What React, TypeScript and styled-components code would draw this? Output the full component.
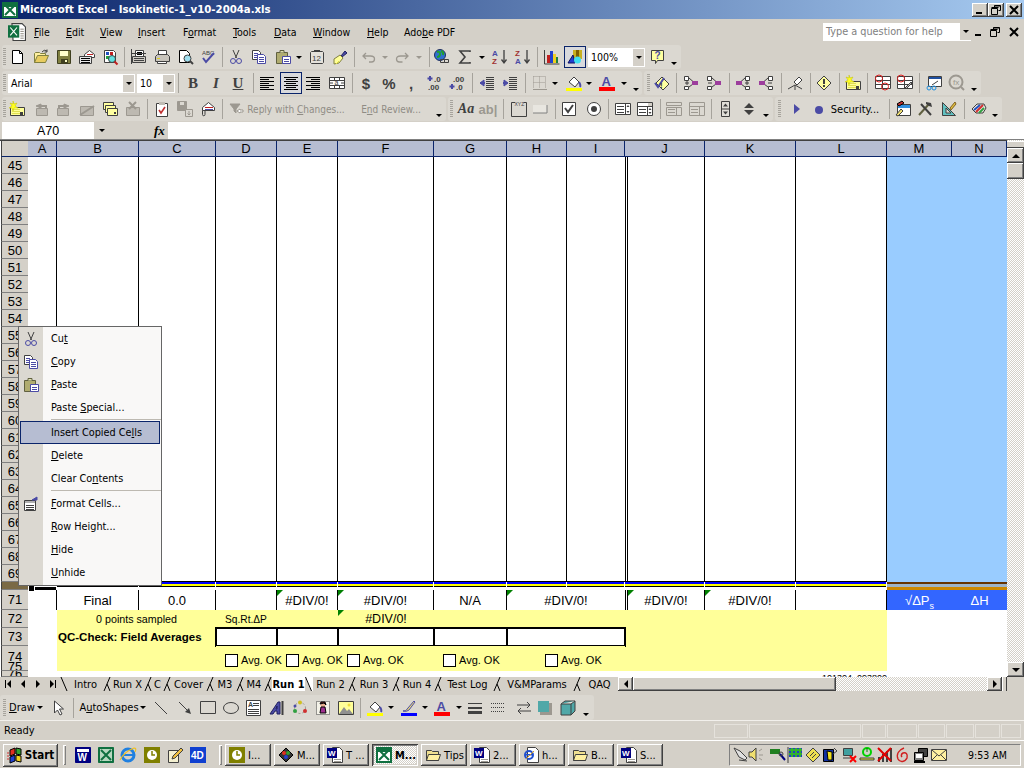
import React from "react";
import styled, { createGlobalStyle } from "styled-components";

const UI = `"DejaVu Sans Condensed", "DejaVu Sans", "Liberation Sans", sans-serif`;
const CELL = `"Liberation Sans", Arial, sans-serif`;
const FACE = "#D4D0C8";
const BAND = "#DBD8D1";
const NAVY = "#0A246A";
const BEVEL = "inset -1px -1px #404040, inset 1px 1px #fff, inset -2px -2px #808080, inset 2px 2px #D4D0C8";
const DITHER = "repeating-conic-gradient(#fff 0 25%, #D4D0C8 0 50%) 0 0 / 2px 2px";

const Global = createGlobalStyle`
  html, body { margin: 0; padding: 0; background: ${FACE}; overflow: hidden; }
  #root { width: 1024px; height: 768px; }
`;

/* ---------- icons ---------- */
const P = ({ d, f = "none", s = "#000", w = 1, da }: { d: string; f?: string; s?: string; w?: number; da?: string }) => (
  <path d={d} fill={f} stroke={s} strokeWidth={w} strokeDasharray={da} />
);
const R = ({ x, y, w, h, f = "#000" }: { x: number; y: number; w: number; h: number; f?: string }) => (
  <rect x={x} y={y} width={w} height={h} fill={f} />
);
const T = ({ x, y, z, f = "#000", b, c }: { x: number; y: number; z: number; f?: string; b?: boolean; c: string }) => (
  <text x={x} y={y} fontSize={z} fill={f} fontWeight={b ? 700 : 400} fontFamily={CELL}>{c}</text>
);
const G1 = "#9C9890";
const G2 = "#BDB9B1";
const PER = "#4B4BA5";
const DK = "#404040";
const Lines = ({ y, x, w, n, s = 2, c = "#000" }: { y: number; x: number; w: number; n: number; s?: number; c?: string }) => (
  <>{Array.from({ length: n }, (_, i) => <R key={i} x={x} y={y + i * s} w={w} h={1} f={c} />)}</>
);
const AltLines = ({ x1, x2, x3, w1, w2 }: { x1: number; x2: number; x3: number; w1: number; w2: number }) => (
  <>
    {Array.from({ length: 7 }, (_, i) => (
      <R key={i} x={i % 2 === 0 ? x1 : x2 + x3} y={2 + i * 2} w={i % 2 === 0 ? w1 : w2} h={1} f="#000" />
    ))}
  </>
);
const Trace = ({ flip, minus }: { flip?: boolean; minus?: boolean }) => (
  <g transform={flip ? "translate(16,0) scale(-1,1)" : undefined}>
    <P d="M1.5 1.5h4v4h-4zM1.5 11.5h4v3h-4z" s={DK} f="#fff" />
    <P d="M6 3l4 3.5M6 12l4-3" s={DK} />
    <R x={9} y={6} w={6} h={4} f="#9C3D9C" />
    {minus ? <R x={2} y={7.5} w={4} h={1} f={DK} /> : <P d="M2 8h4M4 6v4" s={DK} />}
  </g>
);
const Env = () => (
  <>
    <P d="M2.5 6.5l6-5 6 5v3h-12z" f="#fff" s={DK} />
    <R x={5} y={6} w={8} h={1} f="#C02020" /><R x={5} y={8} w={8} h={1} f={PER} />
  </>
);
const ICONS: Record<string, React.ReactNode> = {
  new: <><P d="M3.5 1.5h7l3 3v10h-10z" f="#fff" /><P d="M10.5 1.5v3h3" /></>,
  open: <><P d="M1.5 13.5v-9l1-1h4l1 1h5v2" f="#FFF0A0" s="#808040" /><P d="M1.5 13.5l3-7h11l-3 7z" f="#E8CC60" s="#808040" /><P d="M9 3q2-3 5-1M14 .5v2.5h-2.5" s={DK} /></>,
  save: <><P d="M1.5 1.5h13v13h-13z" f="#808040" s="#404020" /><R x={4} y={2} w={8} h={5} f="#FFFFCC" /><R x={5} y={10} w={7} h={4} f="#404020" /><R x={9} y={11} w={2} h={2} f="#FFFFCC" /></>,
  mail: <><P d="M5.5 5.5l5-4 5 4v3h-10z" f="#fff" s={DK} /><R x={8} y={5} w={6} h={1} f="#C02020" /><P d="M.5 7.5h12v7h-12z" f="#E8E8E8" s={DK} /><Lines x={2} y={9} w={9} n={3} /></>,
  perm: <><P d="M2.5 1.5h9l2 2v10h-11z" f="#fff" s={DK} /><R x={4} y={3} w={3} h={3} f="#2050C0" /><R x={8} y={3} w={3} h={3} f="#C02020" /><R x={4} y={7} w={3} h={3} f="#20A040" /><circle cx={10} cy={10} r={3.5} fill="#60E0E0" stroke={DK} /><P d="M12.5 12.5l3 3" s="#C02020" w={2} /></>,
  parea: <><P d="M4.5 1.5h8v6h-8z" f="#fff" s={DK} /><Lines x={6} y={3} w={5} n={2} /><P d="M.5 0v15M0 4.5h15M1.5 7.5h13v6h-13z" s={DK} f="#CFCBC3" /><Lines x={3} y={9} w={10} n={3} c={DK} /></>,
  print: <><P d="M4.5 1.5h8v5h-8z" f="#fff" s={DK} /><P d="M1.5 7.5l2-2h10l2 2v5h-14z" f="#C8C4BC" s={DK} /><R x={3} y={9} w={3} h={1} f="#E0D020" /><P d="M3.5 12.5h9v2h-9z" f="#fff" s={DK} /></>,
  prev: <><P d="M2.5 1.5h7l3 3v9h-10z" f="#fff" /><circle cx={10.5} cy={9.5} r={3.5} fill="#A0E0F0" stroke={DK} /><P d="M13 12l3 3" s={DK} w={2} /></>,
  spell: <><T x={2} y={6} z={6} f={DK} c="ABC" /><P d="M3 9l3 4 8-9" s={PER} w={2} /></>,
  cut: <><P d="M5 1l3.5 8M11 1l-3.5 8" s={DK} /><circle cx={5} cy={12} r={2.5} fill="none" stroke={PER} /><circle cx={11} cy={12} r={2.5} fill="none" stroke={PER} /></>,
  copy: <><P d="M1.5 1.5h6l2 2v7h-8z" f="#fff" s={DK} /><Lines x={3} y={4} w={4} n={3} c={PER} /><P d="M6.5 5.5h6l2 2v7h-8z" f="#fff" s={PER} /><Lines x={8} y={8} w={5} n={3} c={PER} /></>,
  paste: <><P d="M1.5 3.5h11v11h-11z" f="#B0AC70" s="#606040" /><P d="M5 3.5v-2h4v2" f="#E0E0B0" s="#606040" /><P d="M7.5 7.5h8v7h-8z" f="#fff" s={PER} /><Lines x={9} y={10} w={5} n={2} c={PER} /></>,
  date: <><P d="M1.5 3.5l1-1h11l1 1v10l-1 1h-11l-1-1z" f="#E4E1DA" s={DK} /><R x={5} y={1} w={6} h={2} f={DK} /><T x={3} y={12} z={8} f={DK} c="12" /></>,
  brush: <><P d="M9 7l4-5 2 2-5 4z" f={PER} s="#202060" /><P d="M2 10l6-4 3 3-4 5-5 1z" f="#FFFF99" s="#808040" /><P d="M4 15l3-3" s="#E0E040" /></>,
  undo: <P d="M5 4L2 7l3 3M2.5 7h7q4 0 4 3t-3 3H8" s={G1} w={1.3} />,
  redo: <P d="M11 4l3 3-3 3M13.5 7h-7q-4 0-4 3t3 3h3" s={G1} w={1.3} />,
  link: <><circle cx={7} cy={6} r={5.5} fill="#3070D0" stroke="#203060" /><P d="M4 3q3-1 3 2t-3 3M8 2q3 1 2 4" s="#20A030" w={2} /><P d="M7.5 10.5h4v3h-4zM11.5 10.5h4v3h-4z" s={DK} /></>,
  sigma: <P d="M13 3V2H3l5 6-5 6h10v-1" s={DK} w={1.6} />,
  az: <><T x={0} y={7} z={8} f={PER} b c="A" /><T x={0} y={15} z={8} f="#A03030" b c="Z" /><P d="M12 1v12M9.5 10.5l2.5 3.5 2.5-3.5" s={DK} w={1.3} /></>,
  za: <><T x={0} y={7} z={8} f="#A03030" b c="Z" /><T x={0} y={15} z={8} f={PER} b c="A" /><P d="M12 1v12M9.5 10.5l2.5 3.5 2.5-3.5" s={DK} w={1.3} /></>,
  chart: <><P d="M.5 1v14h15" s={DK} /><R x={3} y={6} w={3} h={8} f="#C02020" /><R x={6} y={2} w={3} h={12} f="#2040D0" /><R x={9} y={5} w={3} h={9} f="#F0D020" /><R x={12} y={8} w={2} h={6} f="#208040" /></>,
  draw: <><R x={6} y={1} w={9} h={9} f="#C8B020" /><R x={9} y={1} w={3} h={9} f="#806000" /><P d="M1 14l5-8 2 8z" f="#2040D0" s="#101060" /><circle cx={10.5} cy={11} r={3.5} fill="#40E0F0" /></>,
  help: <><P d="M1.5 1.5h12v10h-6l-2 3v-3h-4z" f="#FFFFA0" s={DK} /><T x={4.5} y={10} z={10} f={PER} b c="?" /></>,
  alignL: <AltLines x1={1} x2={1} x3={0} w1={14} w2={9} />,
  alignC: <AltLines x1={1} x2={3} x3={0} w1={14} w2={10} />,
  alignR: <AltLines x1={1} x2={6} x3={0} w1={14} w2={9} />,
  merge: <><P d="M.5 2.5h15v11H.5z" f="#fff" s={DK} /><P d="M.5 5.5h15M.5 10.5h15M5.5 2.5v3M10.5 2.5v3M5.5 10.5v3M10.5 10.5v3" s={DK} /><T x={5.5} y={10} z={7} f={DK} c="a" /><P d="M1 8h3M15 8h-3" s={DK} /></>,
  incd: <><P d="M3 1v5M.5 3.5h5" s={PER} w={2} /><T x={7} y={7} z={8} f={DK} b c=".0" /><T x={1} y={15} z={8} f={DK} b c=".00" /></>,
  decd: <><T x={4} y={7} z={8} f={DK} b c=".00" /><P d="M.5 11.5h5" s={PER} w={2} /><P d="M3 9v5" s={PER} w={2} /><T x={7} y={15} z={8} f={DK} b c=".0" /></>,
  outd: <><P d="M5 5L1 8l4 3z" f={PER} s={PER} /><P d="M1 8h5" s={PER} w={2} /><Lines x={7} y={2} w={8} n={7} c={DK} /></>,
  ind: <><P d="M2 5l4 3-4 3z" f={PER} s={PER} /><P d="M1 8h3" s={PER} w={2} /><Lines x={7} y={2} w={8} n={7} c={DK} /></>,
  borders: <><P d="M1.5 1.5h12v12M1.5 1.5v12M7.5 1.5v12M1.5 7.5h12" s={G1} da="1 1" /><P d="M1 14.5h14" s={G1} /></>,
  fill: <><P d="M3 7l5-5 5 5-4 5z" f="#fff" s={DK} /><P d="M13 7q2 3 1 5" s={PER} w={2} /><R x={0} y={13} w={16} h={3} f="#FFFF00" /></>,
  fontc: <><T x={2.5} y={11} z={13} f={PER} b c="A" /><R x={0} y={12} w={16} h={4} f="#FF0000" /></>,
  aud: <><P d="M2 8l6-6 7 7-6 6z" f="#FFFFA0" s={DK} /><P d="M1 8l3 4 6-9" s={PER} w={2} /><T x={6} y={13} z={8} f={DK} b c="!" /></>,
  tr1: <Trace />,
  tr2: <Trace minus />,
  tr3: <Trace flip />,
  tr4: <Trace flip minus />,
  erase: <><P d="M7 7l5-5 3 3-5 5z" f="#fff" s={DK} /><P d="M8 10L1 14M8 10v5M8 10l7 4" s={DK} /></>,
  err: <><P d="M8 1l7 7-7 7-7-7z" f="#FFFFA0" s={DK} /><R x={7} y={4} w={2} h={5} f={DK} /><R x={7} y={10} w={2} h={2} f={DK} /></>,
  ncmt: <><P d="M1.5 6.5h14v8h-14z" f="#FFFF99" s={DK} /><Lines x={3} y={8} w={8} n={3} c="#E0E050" /><P d="M4 0l1 3 3-1-2 3 3 2-4 0-1 3-1-3-3 0 3-2-2-3 3 1z" f="#FFFF20" s="#C0C000" w={0.5} /><R x={11} y={11} w={3} h={3} f={DK} /></>,
  pcmt: <><P d="M3.5 7.5h11v7h-11z" f={G2} s={G1} /><P d="M8 3L3 5l5 2z" f={G1} s={G1} /><P d="M7 5h6v3" s={G1} w={2} /></>,
  ncm2: <><P d="M1.5 7.5h11v7h-11z" f={G2} s={G1} /><P d="M8 3l5 2-5 2z" f={G1} s={G1} /><P d="M9 5H3v3" s={G1} w={2} /></>,
  hcmt: <><P d="M1.5 5.5h13v9h-13z" f={G2} s={G1} /><P d="M1 14l14-9" s={G1} w={2} /></>,
  scmt: <><P d="M1.5 1.5h10v7h-10z" f="#FFFFA0" s={DK} /><P d="M3.5 4.5h10v7h-10z" f="#FFFFA0" s={DK} /><P d="M5.5 7.5h10v7h-10z" f="#FFFFA0" s={DK} /><R x={12} y={11} w={2} h={2} f={DK} /></>,
  dcmt: <><P d="M1.5 6.5h13v8h-13z" f={G2} s={G1} /><P d="M4 1l7 7M11 1L4 8" s={G1} w={2} /></>,
  task: <><P d="M2.5 2.5h11v13h-11z" f="#fff" s={DK} /><R x={5} y={1} w={6} h={3} f="#C0BCB4" /><P d="M5 9l2 3 4-6" s="#C03030" w={1.6} /></>,
  gsave: <><P d="M.5.5h9v9h-9z" f={G1} s={G1} /><R x={3} y={1} w={4} h={3} f="#DBD8D1" /><P d="M8.5 8.5h7v7h-7z" f="#DBD8D1" s={G1} /><P d="M12 10v4M10.5 12.5l1.5 1.5 1.5-1.5" s={G1} /></>,
  mail2: <><Env /><R x={2} y={11} w={11} h={3} f="#DBD8D1" /><P d="M2.5 9.5v4a1.2 1.2 0 0 0 2.5 0v-4" s={DK} /></>,
  reply: <><P d="M1 3h10L7 8v4L5 10V8z" f={G1} s={G1} /><P d="M11 8l-3 2 3 2v-1h3V9h-3z" f="#fff" s={G1} /></>,
  xyz: <><P d="M4 1.5H.5v14h15v-14H13" s={DK} /><T x={3.5} y={5} z={5} f={DK} c="XYZ" /></>,
  btn: <><R x={1} y={4} w={14} h={8} f="#E8E6E0" /><P d="M1 12h14V4" s="#808080" /></>,
  chk: <><P d="M1.5 1.5h13v13h-13z" f="#fff" s={DK} /><P d="M4 7l3 4 5-7" s={DK} w={2} /></>,
  rad: <><circle cx={8} cy={8} r={6.5} fill="#fff" stroke={DK} /><circle cx={8} cy={8} r={3} fill={DK} /></>,
  lst: <><P d="M.5 2.5h15v11H.5zM10.5 2.5v11" f="#fff" s={DK} /><Lines x={2} y={5} w={7} n={3} s={3} c={DK} /><P d="M13 4l-1.5 2h3zM13 12l-1.5-2h3z" f={DK} s="none" /></>,
  cmb: <><P d="M.5 1.5h15v13H.5zM.5 5.5h15M10.5 5.5v9" f="#fff" s={DK} /><R x={11} y={2} w={4} h={3} f={FACE} /><Lines x={2} y={8} w={7} n={2} s={3} c={DK} /><P d="M13 7l-1.5 2h3zM13 13l-1.5-2h3z" f={DK} s="none" /></>,
  glst: <><P d="M.5 1.5h15v3H.5zM.5 6.5h15v8H.5zM10.5 6.5v8" s={G1} /><Lines x={2} y={8} w={7} n={2} s={3} c={G1} /></>,
  gcmb: <><P d="M.5 1.5h15v13H.5zM.5 5.5h15M10.5 5.5v9" s={G1} /><Lines x={2} y={8} w={7} n={2} s={3} c={G1} /></>,
  spn: <><P d="M3.5.5h8v15h-8z" f="#E0DED8" s={DK} /><P d="M3.5 8h8" s={DK} /><P d="M7.5 2.5l-2.5 3h5zM7.5 13.5l-2.5-3h5z" f={DK} s="none" /></>,
  scr: <P d="M8 2l-5 5h10zM8 14l-5-5h10z" f={DK} s="none" />,
  play: <P d="M5 3l6 5-6 5z" f={PER} s="none" />,
  rec: <circle cx={8} cy={9} r={4} fill={PER} />,
  tb: <><P d="M1.5 3.5h13v11h-13z" f="#fff" s={DK} /><R x={2} y={4} w={12} h={3} f="#3090E0" /><P d="M1 3l5-3 2 2-5 3z" f="#C03030" /><P d="M0 14l5-6 2 2-5 5z" f="#F0E070" s={DK} /></>,
  ham: <><P d="M2 14L12 3" s="#606040" w={2} /><P d="M14 14L4 3" s={DK} w={2} /><P d="M9 1l5 1 1 4-3-1-3-2z" f={DK} s="none" /></>,
  rul: <><P d="M1.5 1.5v13h13z" f="#60C0C0" s={DK} /><P d="M5 7v5h5z" f="#DBD8D1" s={DK} /><P d="M9 7l5-6 1 2-5 6z" f="#E0C040" s="#806020" /></>,
  col: <><P d="M1 8l5-5h7l2 4-3 5H5z" f="#E8E6E0" s={DK} /><P d="M3 9l6-5" s="#2050C0" w={2} /><P d="M5 11l7-7" s="#D03030" w={2} /><P d="M8 12l5-5" s="#30A040" w={2} /></>,
  cursor: <P d="M3.5 1v12l3-3 2.5 5 2-1-2.5-5h4z" f="#fff" s={DK} />,
  line: <P d="M2 2l12 12" s={DK} />,
  arrw: <><P d="M2 2l8 8" s={DK} /><P d="M14 14l-6-2 4-4z" f={DK} s="none" /></>,
  rect: <P d="M.5 1.5h15v12H.5z" s={DK} />,
  oval: <ellipse cx={8} cy={8} rx={7.5} ry={5.5} fill="none" stroke={DK} />,
  tbox: <><P d="M.5.5h14v15h-14z" f="#fff" s={DK} /><T x={2} y={7} z={7} f={DK} b c="A" /><Lines x={7} y={3} w={6} n={2} c={DK} /><Lines x={2} y={9} w={11} n={3} c={DK} /></>,
  wa: <><P d="M1 14L9 2h2v12H8V11H6l-2 3zM7 9h1V6z" f={PER} s="#202060" /><P d="M13.5 1v14" s={DK} w={2} /></>,
  dia: <><circle cx={8} cy={8} r={5.5} fill="none" stroke={G1} strokeDasharray="2 2" /><circle cx={8} cy={2.5} r={2} fill="#D0C020" /><circle cx={3} cy={11} r={2} fill="#30A040" /><circle cx={13} cy={11} r={2} fill="#D03030" /><circle cx={3} cy={6} r={1.5} fill={PER} /></>,
  clip: <><P d="M1.5 1.5h13v13h-13z" f="#F4F2E8" s={DK} da="1 1" /><circle cx={8} cy={5} r={2.5} fill="#E8B090" /><P d="M5 13l1-6h4l1 6z" f="#A03090" /><P d="M5 4l1-2h4l1 3-2-2z" f="#802020" /></>,
  pic: <><P d="M.5 1.5h15v13H.5z" f="#FFFF99" s={DK} /><P d="M1 14l5-7 3 4 2-2 4 5z" f="#909090" s="none" /><circle cx={11} cy={5} r={1.5} fill="#F0E040" /></>,
  lcol: <><P d="M2 11q3 1 5-3l6-7 1 1-6 8q-2 2-6 1" f="#F0E070" s={PER} /><R x={0} y={13} w={16} h={3} f="#0000FF" /></>,
  ls: <><R x={1} y={3} w={14} h={1} f={DK} /><R x={1} y={7} w={14} h={2} f={DK} /><R x={1} y={11} w={14} h={3} f={DK} /></>,
  ds: <P d="M1 3.5h14M1 7.5h14M1 11.5h14" s={DK} da="1 1" />,
  ars: <P d="M1 5h13M11 2l3 3-3 3M15 11H2M5 8l-3 3 3 3" s={DK} />,
  sh: <><R x={3} y={3} w={12} h={12} f="#9C9890" /><R x={1} y={1} w={11} h={11} f="#50A8A8" /></>,
  d3: <><P d="M1 4l4-3h10v10l-4 4H1z" f="#50A8A8" s={DK} /><P d="M1 4h10l4-3M11 4v11" f="#E8E6E0" s={DK} /></>,
  xl: <><P d="M3.5.5h9l3 3v12h-11z" f="#fff" s={DK} /><R x={0} y={2} w={10} h={11} f="#107040" /><P d="M2 4l6 7M8 4l-6 7" s="#fff" /><Lines x={11} y={5} w={3} n={5} c={G1} /></>,
  xlb: <><R x={0} y={0} w={16} h={16} f="#107040" /><R x={2} y={2} w={12} h={12} f="#fff" /><P d="M3 3l10 10M13 3L3 13" s="#107040" w={2} /><P d="M2 2h12v3H2z" f="#107040" s="none" /></>,
  start: <><P d="M3 3l5-2v6l-5 2z" f="#E03020" s="#000" /><P d="M9 1l5 1v6l-5-1z" f="#30A030" s="#000" /><P d="M3 10l5-2v6l-5 2z" f="#2040D0" s="#000" /><P d="M9 8l5 1v6l-5-1z" f="#F0D020" s="#000" /><P d="M0 6h2M0 9h2M0 12h2" s="#D03030" /></>,
  wd: <><P d="M.5.5h15v15H.5z" f="#000080" s="#000080" /><R x={2} y={2} w={12} h={3} f="#fff" /><T x={2.5} y={14} z={10} f="#fff" b c="W" /></>,
  wdoc: <><P d="M5.5.5h7l3 3v12h-10z" f="#fff" s={DK} /><R x={0} y={1} w={10} h={10} f="#000080" /><T x={1} y={9} z={8} f="#fff" b c="W" /><Lines x={7} y={12} w={7} n={2} c={G1} /></>,
  xq: <><P d="M.5.5h15v15H.5z" f="#107040" s="#107040" /><R x={2} y={2} w={12} h={12} f="#B8D8C0" /><P d="M3 3l10 10M13 3L3 13" s="#107040" w={2} /></>,
  ie: <><circle cx={8} cy={8} r={6} fill="none" stroke="#2080E0" strokeWidth={3} /><R x={3} y={7} w={11} h={2} f="#2080E0" /><P d="M0 13Q4 5 14 1q3 0 1 4" s="#F0C020" w={1.2} /></>,
  clk: <><R x={0} y={0} w={16} h={16} f="#808000" /><circle cx={8} cy={8} r={5} fill="#fff" /><P d="M8 4v4h3" s="#808000" w={1.5} /></>,
  note: <><P d="M1.5 3.5h10v12h-10z" f="#F4F0D0" s={DK} /><P d="M6 9l8-8 2 2-8 8-3 1z" f="#F0C040" s={DK} /></>,
  d4: <><R x={0} y={0} w={16} h={16} f="#1040D0" /><T x={1} y={12} z={10} f="#fff" b c="4D" /></>,
  multi: <><P d="M1 8l7-7 7 7-7 7z" f="#333" /><circle cx={6} cy={6} r={2} fill="#E03020" /><circle cx={10} cy={6} r={2} fill="#30A030" /><circle cx={8} cy={10} r={2} fill="#2040D0" /></>,
  folder: <><P d="M1.5 13.5v-10h5l1 1h6v9z" f="#F0E090" s={DK} /><P d="M1.5 13.5l2-6h12l-2 6z" f="#FFF0A0" s={DK} /></>,
  iedoc: <><P d="M4.5.5h8l3 3v12h-11z" f="#fff" s={DK} /><circle cx={6} cy={8} r={4} fill="none" stroke="#2050D0" strokeWidth={2} /><R x={3} y={7} w={7} h={1.5} f="#2050D0" /><P d="M3 12l8-8" s="#E0A020" /></>,
  t1: <P d="M1 1l5 9 6 3 2-2-7-7z M6 13l8 1" f="#E0E0E0" s={DK} />,
  t2: <><P d="M1 5h3l4-4v13l-4-4H1z" f="#F0E070" s={DK} /><P d="M11 4l3-2M11 8h4M11 11l3 2" s={G1} /></>,
  t3: <><R x={0} y={2} w={10} h={5} f="#208020" /><P d="M10 7l5 6" s="#000080" w={2} /><circle cx={11} cy={7} r={2} fill="none" stroke={DK} /></>,
  t4: <><P d="M1 0v16" s={DK} /><R x={2} y={1} w={13} h={9} f="#2040C0" /><P d="M2 3h13M2 7h13M5 1v9M9 1v9M13 1v9" s="#30B030" w={2} /></>,
  t5: <><P d="M1 8l7-7 7 7-7 7z" f="#F0E050" s={DK} /><P d="M5 9l4-4M7 11l4-4" s={DK} /></>,
  t6: <><P d="M1.5 2.5h10v12h-10z" f="#1030A0" s="#000" /><P d="M5 4l5 1v8H6z" f="#F0E020" /><P d="M12 1l3 3-4 3" s={DK} /></>,
  t7: <><P d="M2.5 1.5h9v7h-9z" f="#40A0A0" s={DK} /><P d="M2 11h11" s={DK} /><P d="M9 9l6 6M15 9l-6 6" s="#FF0000" w={2} /></>,
  t8: <><circle cx={8} cy={5} r={4} fill="none" stroke="#00D000" strokeWidth={2} /><P d="M8 1v4" s="#008000" /><P d="M1 11h14v2H1z" f="#E0E040" s={DK} /></>,
  t9: <><R x={1} y={10} w={2} h={5} f={DK} /><R x={5} y={7} w={2} h={8} f={DK} /><R x={9} y={4} w={2} h={11} f={DK} /><R x={13} y={1} w={2} h={14} f={DK} /><P d="M1 1l13 13M14 1L1 14" s="#E00000" w={2} /></>,
  t10: <P d="M9 1C4 3 1 7 3 12c2 4 7 3 9-1 1-4-1-6-4-5-2 1-2 3-1 4" s="#D02020" w={1.5} />,
  t11: <><P d="M5.5 1.5h9v8h-9z" f={DK} s="#000" /><P d="M1.5 5.5h9v8h-9z" f="#808080" s="#000" /><R x={3} y={7} w={6} h={4} f="#fff" /><R x={1} y={14} w={11} h={2} f="#000" /></>,
  t12: <><P d="M.5 2.5h15v11H.5z" f="#FFF0A0" s={DK} /><P d="M1 3l7 6 7-6M1 13l5-5M15 13l-5-5" s={DK} /></>,
  circ: <><P d="M.5 1.5h15v12H.5zM.5 5.5h15M.5 9.5h15M7.5 1.5v12" f="#fff" s={DK} /><circle cx={4} cy={3.5} r={3.5} fill="none" stroke="#E02020" /><circle cx={10} cy={11.5} r={3.5} fill="none" stroke="#E02020" /></>,
  clr: <><P d="M.5 1.5h15v12H.5zM.5 5.5h15M.5 9.5h15M7.5 1.5v12" f="#fff" s={DK} /><circle cx={4} cy={3.5} r={3.5} fill="none" stroke="#E02020" /><P d="M8 13l6-6 1 1-6 6z" f="#C0C0C0" s={DK} /></>,
  watch: <><P d="M2.5 1.5h13v10h-13z" f="#fff" s={DK} /><R x={3} y={2} w={12} h={2} f="#2050A0" /><P d="M6 10l6-4" s={DK} /><circle cx={3} cy={13} r={2} fill="none" stroke="#2090E0" /><circle cx={8} cy={13} r={2} fill="none" stroke="#2090E0" /></>,
  evalf: <><circle cx={7} cy={7} r={6.5} fill="none" stroke={G1} strokeWidth={2} /><T x={4} y={10} z={8} f={G1} c="fx" /><P d="M12 12l3 3" s={G1} w={2} /></>,
  fmt: <><P d="M1.5 4.5h11v10h-11z" f="#fff" s={DK} /><R x={2} y={5} w={10} h={2} f="#B0B0B0" /><Lines x={3} y={9} w={8} n={3} c={DK} /><P d="M9 4l5-3v3z" f={PER} s={PER} /></>,
};
const GlyphSvg = styled.svg`
  display: block;
  flex: none;
  overflow: visible;
`;
const Glyph = ({ n, size = 16 }: { n: string; size?: number }) => (
  <GlyphSvg width={size} height={size} viewBox="0 0 16 16">{ICONS[n]}</GlyphSvg>
);

/* ---------- frame ---------- */
const Page = styled.div`
  width: 1024px;
  height: 768px;
  display: flex;
  flex-direction: column;
  background: ${FACE};
  overflow: hidden;
  font-family: ${UI};
  font-size: 11px;
  color: #000;
`;
const TitleBar = styled.div`
  height: 19px;
  flex: none;
  display: flex;
  align-items: center;
  padding: 0 2px;
  gap: 2px;
  background: linear-gradient(90deg, ${NAVY}, #A6CAF0);
  color: #fff;
  box-sizing: border-box;
`;
const TitleText = styled.span`
  flex: 1;
  font-weight: 700;
  font-size: 11.3px;
  white-space: nowrap;
`;
const CapButton = styled.div<{ $ml?: number }>`
  width: 16px;
  height: 14px;
  flex: none;
  margin-left: ${(p) => p.$ml ?? 0}px;
  background: ${FACE};
  box-shadow: ${BEVEL};
  display: flex;
  align-items: center;
  justify-content: center;
`;
const MenuBar = styled.div`
  height: 25px;
  flex: none;
  display: flex;
  align-items: center;
`;
const MenuIcon = styled.div`
  margin-left: 8px;
  width: 26px;
  flex: none;
`;
const MenuItem = styled.span<{ $w: number }>`
  width: ${(p) => p.$w}px;
  flex: none;
  font-size: 10.5px;
  white-space: nowrap;
`;
const U = styled.u`
  text-underline-offset: 1px;
`;
const HelpBox = styled.div`
  width: 148px;
  height: 18px;
  flex: none;
  background: #fff;
  display: flex;
  align-items: center;
  justify-content: space-between;
  padding-left: 3px;
  box-sizing: border-box;
  color: #808080;
  font-size: 10.8px;
`;
const DocCtl = styled.div<{ $ml: number }>`
  margin-left: ${(p) => p.$ml}px;
  width: 12px;
  flex: none;
  display: flex;
  justify-content: center;
`;
const Bars = styled.div`
  flex: none;
  display: flex;
  flex-direction: column;
  gap: 2px;
  padding-top: 1px;
`;
const Bar = styled.div`
  height: 24px;
  display: flex;
`;
const Band = styled.div<{ $ml: number; $w: number }>`
  margin-left: ${(p) => p.$ml}px;
  width: ${(p) => p.$w}px;
  flex: none;
  display: flex;
  align-items: center;
  background: ${BAND};
  border-radius: 3px;
  box-sizing: border-box;
`;
const Slot = styled.div<{ $w: number; $ml: number; $on?: boolean }>`
  width: ${(p) => p.$w}px;
  margin-left: ${(p) => p.$ml}px;
  flex: none;
  display: flex;
  align-items: center;
  justify-content: center;
  height: 22px;
  box-sizing: border-box;
  ${(p) => p.$on && `background: #D8D9DC; border: 1px solid ${NAVY};`}
`;
const Arrow = styled.i<{ $c?: string }>`
  display: block;
  width: 0;
  height: 0;
  border: 3px solid transparent;
  border-bottom: 0;
  border-top: 3px solid ${(p) => p.$c ?? "#000"};
`;
const Chev = styled(Arrow)`
  margin-top: 13px;
`;
const Sep = styled.i`
  display: block;
  width: 1px;
  height: 20px;
  background: #A6A39C;
`;
const Grip = styled.i`
  display: block;
  width: 3px;
  height: 18px;
  background: repeating-linear-gradient(#A6A39C 0 1px, transparent 1px 2px);
`;
const ComboBox = styled.div<{ $w: number }>`
  width: ${(p) => p.$w}px;
  height: 19px;
  background: #fff;
  border: 1px solid #fff;
  box-sizing: border-box;
  display: flex;
  align-items: center;
  justify-content: space-between;
  padding-left: 2px;
  font-size: 10.5px;
`;
const ComboDrop = styled.div`
  width: 11px;
  height: 17px;
  background: ${FACE};
  display: flex;
  align-items: center;
  justify-content: center;
  flex: none;
`;
const StyleLetter = styled.span<{ $i?: boolean; $u?: boolean }>`
  font-family: "Liberation Serif", serif;
  font-weight: 700;
  font-size: 15px;
  color: ${DK};
  font-style: ${(p) => (p.$i ? "italic" : "normal")};
  text-decoration: ${(p) => (p.$u ? "underline" : "none")};
`;
const NumSym = styled.span`
  font-family: ${CELL};
  font-weight: 700;
  font-size: 15px;
  color: ${DK};
`;
const AaText = styled.span`
  font-family: "Liberation Serif", serif;
  font-weight: 700;
  font-style: italic;
  font-size: 14px;
  color: ${DK};
`;
const AbText = styled.span`
  font-family: ${CELL};
  font-weight: 700;
  font-size: 13px;
  color: ${G1};
`;
const BarLabel = styled.span<{ $off?: boolean }>`
  font-size: ${(p) => (p.$off ? 10 : 11)}px;
  white-space: nowrap;
  color: ${(p) => (p.$off ? "#8F8C85" : "#000")};
`;

/* ---------- toolbar data ---------- */
type Item = { c: number; w: number; el: React.ReactNode; on?: boolean };
const I = (n: string, c: number, on?: boolean): Item => ({ c, w: 22, el: <Glyph n={n} />, on });
const A = (c: number, col?: string): Item => ({ c, w: 8, el: <Arrow $c={col} /> });
const S = (c: number): Item => ({ c, w: 2, el: <Sep /> });
const V = (c: number): Item => ({ c, w: 8, el: <Chev /> });
const G = (c: number): Item => ({ c, w: 3, el: <Grip /> });
const X = (el: React.ReactNode, c: number, w = 22): Item => ({ c, w, el });
const L = (el: React.ReactNode, left: number, w: number): Item => ({ c: left + w / 2, w, el });

const BandRow = ({ from, to, items, prev }: { from: number; to: number; items: Item[]; prev: number }) => {
  let cur = from;
  return (
    <Band $ml={from - prev} $w={to - from}>
      {items.map((it, i) => {
        const ml = it.c - it.w / 2 - cur;
        cur = it.c + it.w / 2;
        return <Slot key={i} $w={it.w} $ml={ml} $on={it.on}>{it.el}</Slot>;
      })}
    </Band>
  );
};
const Combo = ({ w, t }: { w: number; t: string }) => (
  <ComboBox $w={w}>{t}<ComboDrop><Arrow /></ComboDrop></ComboBox>
);

const bar1: Item[] = [
  G(4), I("new", 17), I("open", 41), I("save", 64), I("mail", 87), I("perm", 110), S(124), I("parea", 139), I("print", 162),
  I("prev", 185), I("spell", 208), S(222), I("cut", 236), I("copy", 259), I("paste", 283), A(299), I("date", 317), I("brush", 340),
  S(354), I("undo", 369), A(385, G1), I("redo", 402), A(419, G1), S(429), I("link", 441), I("sigma", 465), A(482), I("az", 500),
  I("za", 523), S(537), I("chart", 552), I("draw", 575, true), L(<Combo w={57} t="100%" />, 588, 57), I("help", 658), V(674),
];
const bar2a: Item[] = [
  G(4), L(<Combo w={127} t="Arial" />, 8, 127), L(<Combo w={38} t="10" />, 137, 38), S(178),
  X(<StyleLetter>B</StyleLetter>, 193), X(<StyleLetter $i>I</StyleLetter>, 216), X(<StyleLetter $u>U</StyleLetter>, 238), S(253),
  I("alignL", 267), I("alignC", 291, true), I("alignR", 313), I("merge", 337), S(352),
  X(<NumSym>$</NumSym>, 366), X(<NumSym>%</NumSym>, 389), X(<NumSym>,</NumSym>, 411), I("incd", 435), I("decd", 457), S(472),
  I("outd", 487), I("ind", 510), S(525), I("borders", 540), A(555), I("fill", 574), A(589), I("fontc", 607), A(624), V(636),
];
const bar2b: Item[] = [
  G(648), I("aud", 662), S(676), I("tr1", 691), I("tr2", 714), S(729), I("tr3", 743), I("tr4", 766), S(781), I("erase", 795), S(810),
  I("err", 824), S(839), I("ncmt", 853), S(867), I("circ", 883), I("clr", 905), S(919), I("watch", 934), I("evalf", 957), V(974),
];
const bar3a: Item[] = [
  G(4), I("ncmt", 17), I("pcmt", 41), I("ncm2", 64), I("hcmt", 87), I("scmt", 110), I("dcmt", 133), S(147), I("task", 162), I("gsave", 185),
  I("mail2", 208), S(222), I("reply", 237),
  L(<BarLabel $off>Reply with <U>C</U>hanges...</BarLabel>, 248, 96), L(<BarLabel $off>E<U>n</U>d Review...</BarLabel>, 362, 58), V(439),
];
const bar3b: Item[] = [
  G(451), X(<AaText>Aa</AaText>, 466), X(<AbText>ab|</AbText>, 488), S(503), I("xyz", 519), I("btn", 540), S(555), I("chk", 569), I("rad", 594),
  S(608), I("lst", 623), I("cmb", 645), S(660), I("glst", 674), I("gcmb", 697), S(711), I("spn", 726), I("scr", 749), V(766),
];
const bar3c: Item[] = [
  G(779), I("play", 797), I("rec", 819), L(<BarLabel>Security...</BarLabel>, 830, 50), S(889), I("tb", 904), I("ham", 925), I("rul", 949), S(964), I("col", 979), V(995),
];
const drawItems: Item[] = [
  G(4), L(<BarLabel><U>D</U>raw</BarLabel>, 9, 26), A(40), I("cursor", 59), S(73), L(<BarLabel>A<U>u</U>toShapes</BarLabel>, 80, 58), A(143),
  I("line", 161), I("arrw", 185), I("rect", 208), I("oval", 231), I("tbox", 254), I("wa", 277), I("dia", 300), I("clip", 323), I("pic", 346),
  S(360), I("fill", 375), A(391), I("lcol", 409), A(425), I("fontc", 442), A(459), I("ls", 475), I("ds", 498), I("ars", 524), I("sh", 545), I("d3", 568), V(586),
];

/* ---------- formula bar ---------- */
const FormulaBar = styled.div`
  height: 17px;
  flex: none;
  margin-top: 1px;
  display: flex;
  align-items: stretch;
  font-family: ${CELL};
  font-size: 12.5px;
`;
const NameBox = styled.div`
  width: 92px;
  margin-left: 2px;
  background: #fff;
  display: flex;
  align-items: center;
  justify-content: center;
`;
const NameDrop = styled.div`
  width: 60px;
  flex: none;
  padding-left: 5px;
  box-sizing: border-box;
  display: flex;
  align-items: center;
`;
const FxLabel = styled(StyleLetter)`
  width: 14px;
  flex: none;
  font-size: 13px;
  color: #000;
  line-height: 17px;
`;
const FormulaInput = styled.div`
  flex: 1;
  background: #fff;
`;

/* ---------- sheet ---------- */
const COLS = "28px 29px 82px 77px 61px 61px 96px 73px 60px 58px 80px 91px 91px 65px 55px";
const Sheet = styled.div`
  height: 538px;
  flex: none;
  display: flex;
  box-sizing: border-box;
  border-top: 1px solid #808080;
  position: relative;
`;
const GridArea = styled.div`
  width: 1007px;
  flex: none;
  display: flex;
  flex-direction: column;
  overflow: hidden;
  font-family: ${CELL};
  font-size: 13px;
  background: #fff;
  border-top: 1px solid #404040;
  box-sizing: border-box;
`;
const Row = styled.div<{ $h: number }>`
  display: grid;
  grid-template-columns: ${COLS};
  height: ${(p) => p.$h}px;
  flex: none;
`;
const Corner = styled.div`
  margin-left: 1px;
  border-left: 1px solid #404040;
  background: ${FACE};
  border-bottom: 1px solid ${NAVY};
`;
const ColHead = styled.div`
  background: #B6BDD2;
  border-right: 1px solid ${NAVY};
  border-bottom: 1px solid ${NAVY};
  display: flex;
  align-items: center;
  justify-content: center;
  font-size: 13px;
  box-sizing: border-box;
`;
const RowHead = styled.div<{ $dark?: boolean }>`
  margin-left: 1px;
  border-left: 1px solid #404040;
  background: ${(p) => (p.$dark ? "#7A6A45" : FACE)};
  border-bottom: 1px solid #808080;
  display: flex;
  align-items: center;
  justify-content: center;
  font-size: 13px;
  overflow: hidden;
  box-sizing: border-box;
`;
const Cell = styled.div<{
  $bg?: string;
  $line?: boolean;
  $dbl?: boolean;
  $span?: number;
  $c?: string;
  $flag?: boolean;
}>`
  position: relative;
  box-sizing: border-box;
  background: ${(p) => p.$bg ?? "transparent"};
  color: ${(p) => p.$c ?? "#000"};
  border-right: ${(p) => (p.$line ? "1px solid #000" : "0")};
  border-left: ${(p) => (p.$dbl ? "3px double #000" : "0")};
  ${(p) => p.$span && `grid-column: span ${p.$span};`}
  display: flex;
  align-items: center;
  justify-content: center;
  white-space: nowrap;
  ${(p) =>
    p.$flag &&
    `&::before { content: ""; position: absolute; left: 0; top: 0; border: 3px solid transparent; border-left-color: #008000; border-top-color: #008000; }`}
`;
const Stripe = styled.div<{ $m?: boolean }>`
  border-right: 1px solid ${(p) => (p.$m ? "transparent" : "#fff")};
  box-shadow: 0 -1px 0 ${(p) => (p.$m ? "#663300" : "#000")};
  background: ${(p) =>
    p.$m
      ? "linear-gradient(#663300 0 2px, #9DB4C8 2px 5px, #CC8800 5px 8px)"
      : "linear-gradient(#0000FF 0 2px, #FFFF00 2px 4px, #000 4px 5px, #fff 5px 8px)"};
  box-sizing: border-box;
`;
const SelCell = styled.div`
  position: relative;
  border-right: 1px solid #fff;
  box-sizing: border-box;
`;
const Handle = styled.i`
  position: absolute;
  left: 1px;
  top: 4px;
  width: 5px;
  height: 5px;
  background: #000;
`;
const SelLine = styled.i`
  position: absolute;
  left: 7px;
  right: 0;
  top: 5px;
  height: 3px;
  background: #000;
`;
const Small = styled.span`
  font-size: 10.7px;
`;
const SqRt = styled(Cell)`
  justify-content: flex-start;
  padding-left: 9px;
  font-size: 10.2px;
`;
const FormulaVal = styled.span`
  font-size: 12.5px;
`;
const QcLabel = styled(Cell)`
  justify-content: flex-start;
  padding-left: 1px;
  font-weight: 700;
  font-size: 11.5px;
`;
const BoxCell = styled(Cell)`
  background: #fff;
  box-shadow: 0 0 0 1px #000, inset 0 0 0 1px #000;
  z-index: 1;
`;
const CheckCell = styled(Cell)<{ $pl: number; $z: number }>`
  justify-content: flex-start;
  align-items: flex-start;
  padding-left: ${(p) => p.$pl}px;
  padding-top: 8px;
  gap: 3px;
  z-index: ${(p) => p.$z};
`;
const CheckBox = styled.i`
  display: block;
  flex: none;
  width: 13px;
  height: 13px;
  box-sizing: border-box;
  background: #fff;
  border: 1px solid #000;
`;
const CheckText = styled.span`
  font-size: 11px;
  line-height: 13px;
`;
const StampCell = styled(Cell)`
  justify-content: flex-end;
  align-items: flex-start;
  padding-top: 3px;
  font-size: 9px;
  line-height: 9px;
  overflow: hidden;
`;
const Sub = styled.sub`
  font-size: 9px;
  line-height: 0;
`;
const VScroll = styled.div`
  flex: 1;
  display: flex;
  flex-direction: column;
  background: ${DITHER};
`;
const Split = styled.div`
  height: 7px;
  margin-top: 1px;
  flex: none;
  background: ${FACE};
  box-shadow: inset 0 1px #fff, inset 0 -1px #404040;
`;
const ScrollBtn = styled.div<{ $w?: number; $h?: number }>`
  width: ${(p) => (p.$w ? `${p.$w}px` : "auto")};
  height: ${(p) => p.$h ?? 15}px;
  flex: none;
  background: ${FACE};
  box-shadow: ${BEVEL};
  display: flex;
  align-items: center;
  justify-content: center;
`;
const VSpacer = styled.div`
  flex: 1;
`;
const ArrowUp = styled.i`
  width: 0;
  height: 0;
  border: 4px solid transparent;
  border-top: 0;
  border-bottom-color: #000;
`;
const ArrowDn = styled.i`
  width: 0;
  height: 0;
  border: 4px solid transparent;
  border-bottom: 0;
  border-top-color: #000;
`;
const ArrowLf = styled.i`
  width: 0;
  height: 0;
  border: 4px solid transparent;
  border-left: 0;
  border-right-color: #000;
`;
const ArrowRt = styled.i`
  width: 0;
  height: 0;
  border: 4px solid transparent;
  border-right: 0;
  border-left-color: #000;
`;

/* context menu */
const CtxMenu = styled.div`
  position: absolute;
  left: 18px;
  top: 186px;
  width: 144px;
  height: 260px;
  box-sizing: border-box;
  border: 1px solid #666;
  background: linear-gradient(90deg, #DBD8D1 0 24px, #F9F8F7 24px);
  font-family: ${UI};
  font-size: 10.8px;
  overflow: hidden;
  z-index: 5;
`;
const CtxItem = styled.div<{ $on?: boolean }>`
  height: 23px;
  display: flex;
  align-items: center;
  box-sizing: border-box;
  ${(p) => p.$on && `background: #B6BDD2; border: 1px solid ${NAVY}; margin: 0 1px;`}
`;
const CtxIcon = styled.div<{ $on?: boolean }>`
  width: ${(p) => (p.$on ? 30 : 32)}px;
  flex: none;
  display: flex;
  justify-content: center;
  padding-right: 8px;
  box-sizing: border-box;
`;
const CtxSep = styled.div`
  height: 2px;
  margin-left: 32px;
  background: linear-gradient(#BDB9B1 0 1px, transparent 1px);
`;

/* tabs */
const TabBar = styled.div`
  height: 14px;
  flex: none;
  display: flex;
  align-items: stretch;
  margin-bottom: 4px;
`;
const TabNav = styled.div`
  width: 60px;
  flex: none;
  display: flex;
  align-items: center;
  justify-content: space-between;
  padding: 0 4px 0 5px;
  box-sizing: border-box;
`;
const NavGlyph = styled.svg`
  display: block;
`;
const TabEdge = styled.svg`
  display: block;
  flex: none;
`;
const TabLabel = styled.div<{ $w: number; $on?: boolean }>`
  width: ${(p) => p.$w}px;
  flex: none;
  display: flex;
  align-items: center;
  justify-content: center;
  font-size: 11px;
  white-space: nowrap;
  font-weight: ${(p) => (p.$on ? 700 : 400)};
  background: ${(p) => (p.$on ? "#fff" : "transparent")};
`;
const HScroll = styled.div`
  flex: 1;
  display: flex;
  background: ${DITHER};
  margin-right: 22px;
`;
const HThumb = styled.div`
  width: 203px;
  flex: none;
  background: ${FACE};
  box-shadow: ${BEVEL};
`;
const HSplit = styled.div`
  width: 5px;
  flex: none;
  margin-right: 17px;
  margin-left: -22px;
  background: ${FACE};
  box-shadow: inset 1px 0 #fff, inset -1px 0 #404040;
`;
const DrawBar = styled.div`
  height: 25px;
  flex: none;
  display: flex;
  border-bottom: 1px solid #F2F0EC;
  box-sizing: content-box;
`;
const StatusBar = styled.div`
  height: 19px;
  flex: none;
  display: flex;
  align-items: center;
  padding-left: 4px;
  font-size: 11px;
  border-bottom: 1px solid #fff;
`;
const StatusText = styled.span`
  width: 710px;
  flex: none;
`;
const StatusPanel = styled.div<{ $w: number }>`
  width: ${(p) => p.$w}px;
  height: 14px;
  flex: none;
  box-sizing: border-box;
  border: 1px solid #E5E2DC;
  margin-right: 1px;
`;
const TaskBar = styled.div`
  flex: 1;
  display: flex;
  align-items: center;
  padding-top: 1px;
`;
const StartBtn = styled.div`
  margin-left: 3px;
  width: 55px;
  height: 23px;
  flex: none;
  box-shadow: ${BEVEL};
  display: flex;
  align-items: center;
  justify-content: center;
  gap: 2px;
  font-weight: 700;
  font-size: 11.5px;
`;
const Quick = styled.div<{ $ml: number; $w: number }>`
  margin-left: ${(p) => p.$ml}px;
  width: ${(p) => p.$w}px;
  flex: none;
  display: flex;
  justify-content: center;
  align-items: center;
`;
const TaskGrip = styled.i`
  display: block;
  width: 3px;
  height: 20px;
  box-shadow: inset 1px 1px #fff, inset -1px -1px #808080;
`;
const TaskBtn = styled.div<{ $on?: boolean }>`
  width: 46px;
  height: 22px;
  flex: none;
  margin-left: 3px;
  box-sizing: border-box;
  display: flex;
  align-items: center;
  padding-left: 4px;
  gap: 3px;
  font-size: 11px;
  white-space: nowrap;
  box-shadow: ${BEVEL};
  ${(p) =>
    p.$on &&
    `font-weight: 700; background: ${DITHER}; box-shadow: inset 1px 1px #404040, inset -1px -1px #fff, inset 2px 2px #808080, inset -2px -2px ${FACE};`}
`;
const Tray = styled.div`
  margin-left: 66px;
  width: 292px;
  height: 22px;
  flex: none;
  display: flex;
  align-items: center;
  box-sizing: border-box;
  border: 1px solid;
  border-color: #808080 #fff #fff #808080;
`;
const Clock = styled.span`
  margin-left: 21px;
  white-space: nowrap;
  font-size: 10.5px;
`;

/* ---------- data ---------- */
const HEADS = ["A", "B", "C", "D", "E", "F", "G", "H", "I", "J", "K", "L", "M", "N"];
const ROWNUMS = Array.from({ length: 25 }, (_, i) => 45 + i);
const TABS: [string, number, boolean?][] = [
  ["Intro", 35], ["Run X", 33], ["C", 11], ["Cover", 35], ["M3", 22], ["M4", 20], ["Run 1", 33, true], ["Run 2", 35],
  ["Run 3", 36], ["Run 4", 34], ["Test Log", 51], ["V&MParams", 72],
];
const CTX: ([React.ReactNode, string?, boolean?] | null)[] = [
  [<>Cu<U>t</U></>, "cut"], [<><U>C</U>opy</>, "copy"], [<><U>P</U>aste</>, "paste"], [<>Paste <U>S</U>pecial...</>], null,
  [<>Insert Copied Ce<U>l</U>ls</>, undefined, true], [<><U>D</U>elete</>], [<>Clear Co<U>n</U>tents</>], null,
  [<><U>F</U>ormat Cells...</>, "fmt"], [<><U>R</U>ow Height...</>], [<><U>H</U>ide</>], [<><U>U</U>nhide</>],
];
const TASKS: [string, string, boolean?][] = [
  ["clk", "I..."], ["multi", "M..."], ["wdoc", "T ..."], ["xlb", "M...", true], ["folder", "Tips"], ["wdoc", "2..."], ["iedoc", "h..."], ["folder", "B..."], ["wdoc", "S..."],
];
const TRAY: [string, number][] = [
  ["t1", 742], ["t2", 757], ["t3", 779], ["t4", 796], ["t5", 814], ["t6", 831], ["t7", 850], ["t8", 868], ["t9", 886], ["t10", 904], ["t11", 922], ["t12", 940],
];
const QUICK: [string, number][] = [["wd", 83], ["xq", 106], ["ie", 128], ["clk", 152], ["note", 175], ["d4", 198]];
const STATUS = [34, 112, 24, 30, 27, 28, 25, 20];

const CapGlyph = ({ kind, c = "#000" }: { kind: "min" | "res" | "x"; c?: string }) => (
  <GlyphSvg width={10} height={10} viewBox="0 0 10 10">
    {kind === "min" && <R x={1} y={7} w={6} h={2} f={c} />}
    {kind === "res" && <P d="M3.5 2.5v-2h6v5h-2M.5 3.5h6v6h-6zM.5 2.5h7M3.5 1h6" s={c} />}
    {kind === "x" && <P d="M1 1l8 8M9 1L1 9" s={c} w={2} />}
  </GlyphSvg>
);

const Edge = ({ on }: { on?: boolean }) => (
  <TabEdge width={8} height={14} viewBox="0 0 8 14">
    {on ? <P d="M0 0l6 14h2V0z" f="#fff" s="none" /> : null}
    <P d={on ? "M.5 0l6 14" : "M7 0L1 14M4 7l3 7"} s="#000" />
  </TabEdge>
);

export default function App() {
  const bodyRows = ROWNUMS.map((n) => (
    <Row key={n} $h={17}>
      <RowHead>{n}</RowHead>
      {HEADS.slice(0, 12).map((h) => (
        <Cell key={h} $line={h !== "I"} $dbl={h === "J"} />
      ))}
      <Cell $bg="#99CCFF" />
      <Cell $bg="#99CCFF" />
    </Row>
  ));
  const Y = "#FFFF99";
  return (
    <>
      <Global />
      <Page>
        <TitleBar>
          <Glyph n="xlb" />
          <TitleText>Microsoft Excel - Isokinetic-1_v10-2004a.xls</TitleText>
          <CapButton><CapGlyph kind="min" /></CapButton>
          <CapButton $ml={-2}><CapGlyph kind="res" /></CapButton>
          <CapButton><CapGlyph kind="x" /></CapButton>
        </TitleBar>

        <MenuBar>
          <MenuIcon><Glyph n="xl" size={18} /></MenuIcon>
          <MenuItem $w={32}><U>F</U>ile</MenuItem>
          <MenuItem $w={34}><U>E</U>dit</MenuItem>
          <MenuItem $w={38}><U>V</U>iew</MenuItem>
          <MenuItem $w={45}><U>I</U>nsert</MenuItem>
          <MenuItem $w={50}>F<U>o</U>rmat</MenuItem>
          <MenuItem $w={41}><U>T</U>ools</MenuItem>
          <MenuItem $w={39}><U>D</U>ata</MenuItem>
          <MenuItem $w={54}><U>W</U>indow</MenuItem>
          <MenuItem $w={37}><U>H</U>elp</MenuItem>
          <MenuItem $w={419}>Ado<U>b</U>e PDF</MenuItem>
          <HelpBox>Type a question for help<ComboDrop><Arrow /></ComboDrop></HelpBox>
          <DocCtl $ml={2}><CapGlyph kind="min" /></DocCtl>
          <DocCtl $ml={4}><CapGlyph kind="res" /></DocCtl>
          <DocCtl $ml={7}><CapGlyph kind="x" /></DocCtl>
        </MenuBar>

        <Bars>
          <Bar>
            <BandRow from={2} to={681} prev={0} items={bar1} />
          </Bar>
          <Bar>
            <BandRow from={2} to={642} prev={0} items={bar2a} />
            <BandRow from={644} to={981} prev={642} items={bar2b} />
          </Bar>
          <Bar>
            <BandRow from={2} to={446} prev={0} items={bar3a} />
            <BandRow from={448} to={773} prev={446} items={bar3b} />
            <BandRow from={775} to={1002} prev={773} items={bar3c} />
          </Bar>
        </Bars>

        <FormulaBar>
          <NameBox>A70</NameBox>
          <NameDrop><Arrow /></NameDrop>
          <FxLabel $i>fx</FxLabel>
          <FormulaInput />
        </FormulaBar>

        <Sheet>
          <GridArea>
            <Row $h={16}>
              <Corner />
              {HEADS.map((h) => <ColHead key={h}>{h}</ColHead>)}
            </Row>
            {bodyRows}
            <Row $h={8}>
              <RowHead $dark />
              <SelCell><Handle /><SelLine /></SelCell>
              {HEADS.slice(1, 12).map((h) => <Stripe key={h} />)}
              <Stripe $m />
              <Stripe $m />
            </Row>
            <Row $h={20}>
              <RowHead>71</RowHead>
              <Cell $line />
              <Cell $line>Final</Cell>
              <Cell $line>0.0</Cell>
              <Cell $line />
              <Cell $line $flag>#DIV/0!</Cell>
              <Cell $line $flag>#DIV/0!</Cell>
              <Cell $line>N/A</Cell>
              <Cell $span={2} $flag>#DIV/0!</Cell>
              <Cell $line $dbl $flag>#DIV/0!</Cell>
              <Cell $line $flag>#DIV/0!</Cell>
              <Cell $line />
              <Cell $bg="#3366FF" $c="#fff"><span>√ΔP<Sub>s</Sub></span></Cell>
              <Cell $bg="#3366FF" $c="#fff">ΔH</Cell>
            </Row>
            <Row $h={18}>
              <RowHead>72</RowHead>
              <Cell />
              <Cell $bg={Y} $span={2}><Small>0 points sampled</Small></Cell>
              <SqRt $bg={Y}>Sq.Rt.ΔP</SqRt>
              <Cell $bg={Y} />
              <Cell $bg={Y} $flag><FormulaVal>#DIV/0!</FormulaVal></Cell>
              <Cell $bg={Y} $span={6} />
              <Cell /><Cell />
            </Row>
            <Row $h={18}>
              <RowHead>73</RowHead>
              <Cell />
              <QcLabel $bg={Y} $span={2}>QC-Check: Field Averages</QcLabel>
              <BoxCell /><BoxCell /><BoxCell /><BoxCell />
              <BoxCell $span={2} />
              <Cell $bg={Y} $span={3} />
              <Cell /><Cell />
            </Row>
            <Row $h={16}>
              <RowHead>74</RowHead>
              <Cell />
              <Cell $bg={Y} $span={2} />
              <CheckCell $bg={Y} $pl={9} $z={5}><CheckBox /><CheckText>Avg. OK</CheckText></CheckCell>
              <CheckCell $bg={Y} $pl={9} $z={4}><CheckBox /><CheckText>Avg. OK</CheckText></CheckCell>
              <CheckCell $bg={Y} $pl={9} $z={3}><CheckBox /><CheckText>Avg. OK</CheckText></CheckCell>
              <CheckCell $bg={Y} $pl={9} $z={2}><CheckBox /><CheckText>Avg. OK</CheckText></CheckCell>
              <CheckCell $bg={Y} $pl={38} $z={1} $span={2}><CheckBox /><CheckText>Avg. OK</CheckText></CheckCell>
              <Cell $bg={Y} $span={3} />
              <Cell /><Cell />
            </Row>
            <Row $h={9}>
              <RowHead>75</RowHead>
              <Cell />
              <Cell $bg={Y} $span={11} />
              <Cell /><Cell />
            </Row>
            <Row $h={6}>
              <RowHead>76</RowHead>
              <Cell />
              <StampCell $span={11}>101304_093800</StampCell>
              <Cell /><Cell />
            </Row>
          </GridArea>
          <VScroll>
            <Split />
            <ScrollBtn $h={15}><ArrowUp /></ScrollBtn>
            <ScrollBtn $h={16} />
            <VSpacer />
            <ScrollBtn $h={15}><ArrowDn /></ScrollBtn>
          </VScroll>
          <CtxMenu>
            {CTX.map((c, i) =>
              c === null ? (
                <CtxSep key={i} />
              ) : (
                <CtxItem key={i} $on={c[2]}>
                  <CtxIcon $on={c[2]}>{c[1] ? <Glyph n={c[1]} /> : null}</CtxIcon>
                  <span>{c[0]}</span>
                </CtxItem>
              )
            )}
          </CtxMenu>
        </Sheet>

        <TabBar>
          <TabNav>
            <NavGlyph width={7} height={8} viewBox="0 0 7 8"><P d="M.5 0v8" /><P d="M6 0v8L2 4z" f="#000" s="none" /></NavGlyph>
            <NavGlyph width={6} height={8} viewBox="0 0 6 8"><P d="M5 0v8L1 4z" f="#000" s="none" /></NavGlyph>
            <NavGlyph width={6} height={8} viewBox="0 0 6 8"><P d="M1 0v8l4-4z" f="#000" s="none" /></NavGlyph>
            <NavGlyph width={7} height={8} viewBox="0 0 7 8"><P d="M1 0v8l4-4z" f="#000" s="none" /><P d="M6.5 0v8" /></NavGlyph>
          </TabNav>
          <TabEdge width={8} height={14} viewBox="0 0 8 14"><P d="M1 0l6 14" /></TabEdge>
          {TABS.map(([t, w, on]) => (
            <React.Fragment key={t}>
              <TabLabel $w={w} $on={on}>{t}</TabLabel>
              <Edge on={on} />
            </React.Fragment>
          ))}
          <TabLabel $w={37}>QAQ</TabLabel>
          <HScroll>
            <ScrollBtn $w={15} $h={14}><ArrowLf /></ScrollBtn>
            <HThumb />
            <VSpacer />
            <ScrollBtn $w={15} $h={14}><ArrowRt /></ScrollBtn>
          </HScroll>
          <HSplit />
        </TabBar>

        <DrawBar>
          <BandRow from={0} to={594} prev={0} items={drawItems} />
        </DrawBar>

        <StatusBar>
          <StatusText>Ready</StatusText>
          {STATUS.map((w, i) => <StatusPanel key={i} $w={w} />)}
        </StatusBar>

        <TaskBar>
          <StartBtn><Glyph n="start" />Start</StartBtn>
          <Quick $ml={5} $w={3}><TaskGrip /></Quick>
          {QUICK.map(([n, c], i) => {
            const prev = i === 0 ? 66 : QUICK[i - 1][1] + 8;
            return <Quick key={i} $ml={c - 8 - prev} $w={16}><Glyph n={n} /></Quick>;
          })}
          <Quick $ml={13} $w={3}><TaskGrip /></Quick>
          {TASKS.map(([n, t, on], i) => (
            <TaskBtn key={i} $on={on}><Glyph n={n} /><span>{t}</span></TaskBtn>
          ))}
          <Tray>
            {TRAY.map(([n, c], i) => {
              const prev = i === 0 ? 731 : TRAY[i - 1][1] + 8;
              return <Quick key={i} $ml={c - 8 - prev} $w={16}><Glyph n={n} /></Quick>;
            })}
            <Clock>9:53 AM</Clock>
          </Tray>
        </TaskBar>
      </Page>
    </>
  );
}
